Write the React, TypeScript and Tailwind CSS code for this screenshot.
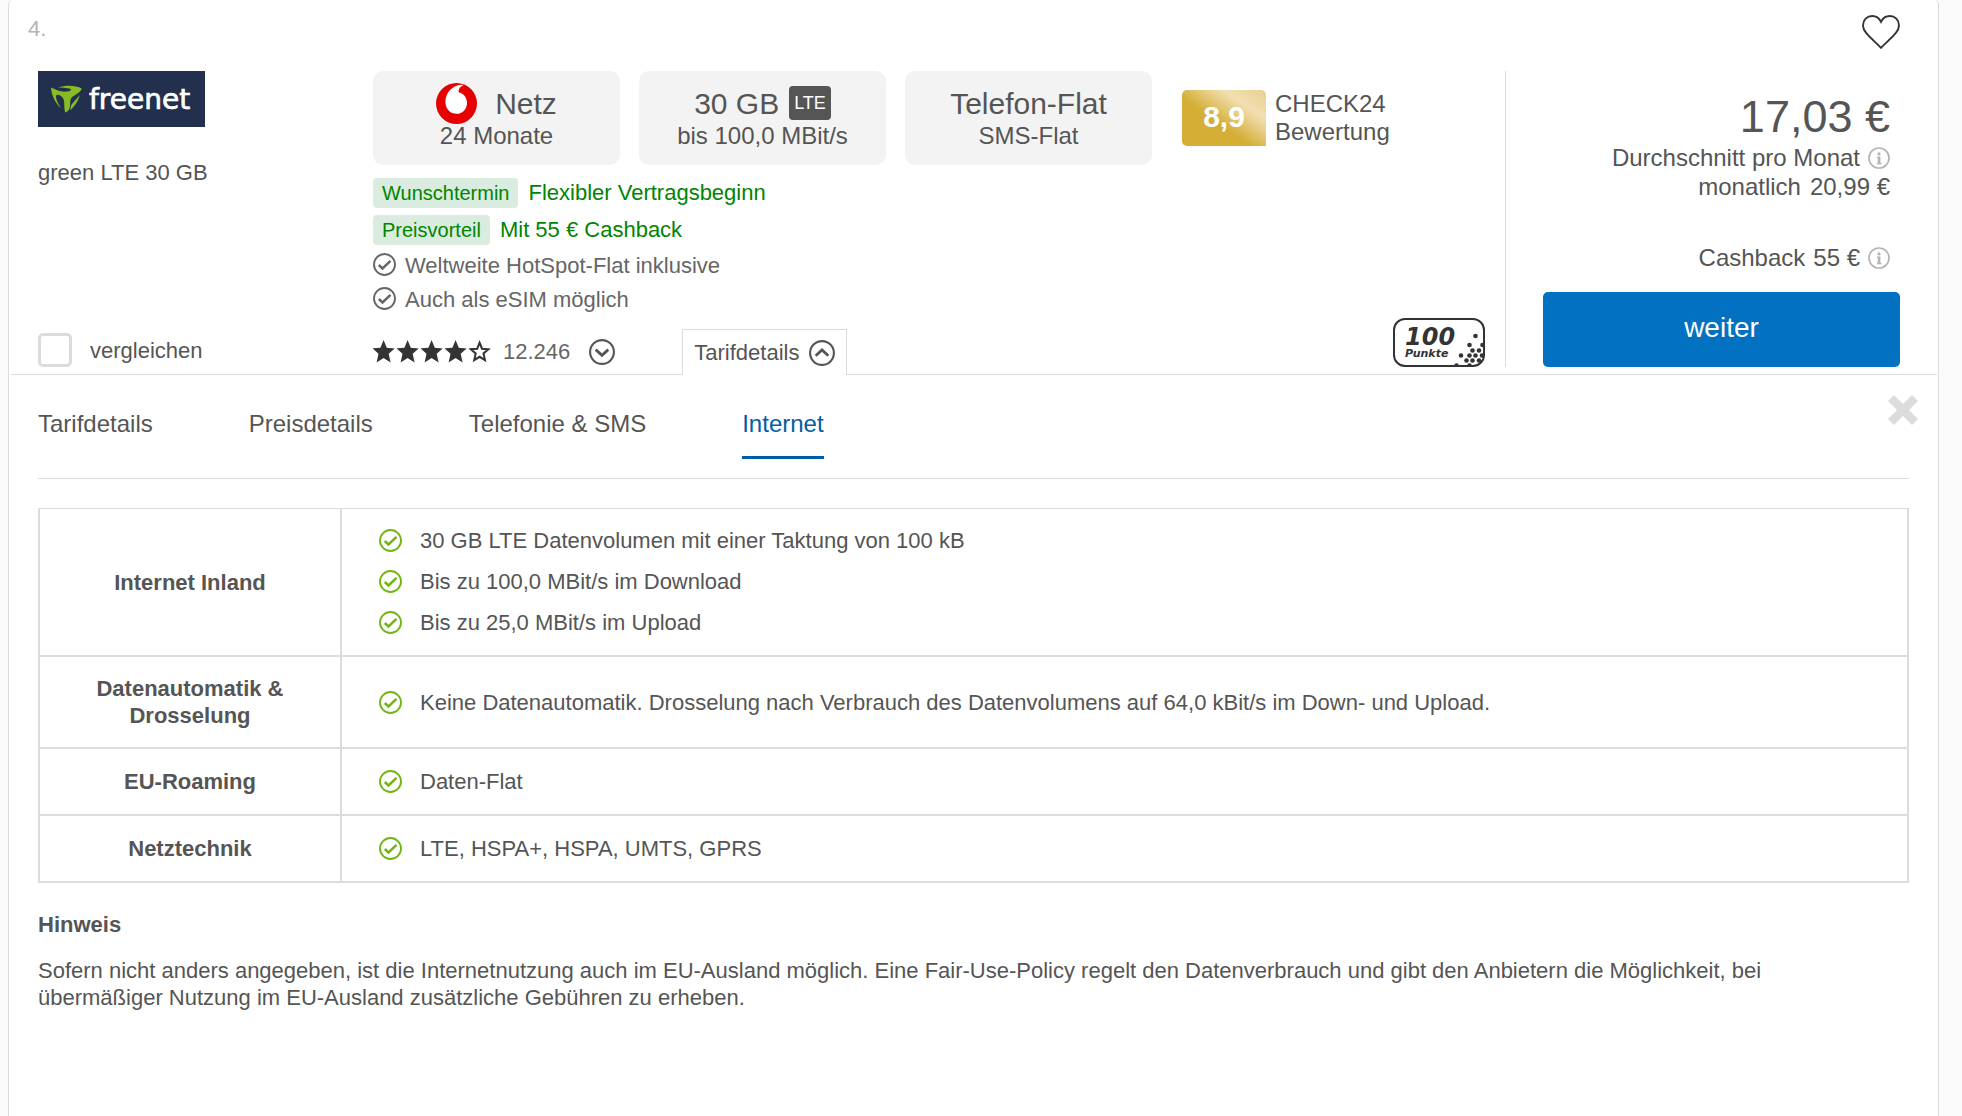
import type { ReactNode } from 'react'

const tabs = ['Tarifdetails', 'Preisdetails', 'Telefonie & SMS', 'Internet']

const rows = [
  {
    title: 'Internet Inland',
    items: [
      '30 GB LTE Datenvolumen mit einer Taktung von 100 kB',
      'Bis zu 100,0 MBit/s im Download',
      'Bis zu 25,0 MBit/s im Upload',
    ],
  },
  {
    title: 'Datenautomatik & Drosselung',
    items: ['Keine Datenautomatik. Drosselung nach Verbrauch des Datenvolumens auf 64,0 kBit/s im Down- und Upload.'],
  },
  { title: 'EU-Roaming', items: ['Daten-Flat'] },
  { title: 'Netztechnik', items: ['LTE, HSPA+, HSPA, UMTS, GPRS'] },
]

const CheckCircle = ({ className }: { className: string }) => (
  <svg viewBox="0 0 23 23" fill="none" stroke="currentColor" className={`h-[23px] w-[23px] shrink-0 ${className}`}>
    <circle cx="11.5" cy="11.5" r="10.5" strokeWidth="1.9" />
    <path d="M5.8 12l3.7 3.5 8-7.6" strokeWidth="2.5" />
  </svg>
)

const ChevronCircle = ({ up = false }: { up?: boolean }) => (
  <svg viewBox="0 0 26 26" fill="none" stroke="currentColor" className="h-[26px] w-[26px] shrink-0">
    <circle cx="13" cy="13" r="11.9" strokeWidth="2.1" />
    <path d={up ? 'M6.7 15.7l6.3-5.7 6.3 5.7' : 'M6.7 10.6l6.3 5.7 6.3-5.7'} strokeWidth="2.8" />
  </svg>
)

const InfoIcon = () => (
  <svg viewBox="0 0 22 22" className="h-[22px] w-[22px] shrink-0 text-[#b4b4b4]">
    <circle cx="11" cy="11" r="10" fill="none" stroke="currentColor" strokeWidth="1.7" />
    <circle cx="11" cy="6.9" r="1.6" fill="currentColor" />
    <path d="M9 9.6h3.4v6.2h1v1.4H8.8v-1.4h1V11H9z" fill="currentColor" />
  </svg>
)

const Star = ({ filled }: { filled: boolean }) => (
  <svg viewBox="0 0 24 24" className="h-6 w-6 text-[#333]">
    <path
      d={
        filled
          ? 'M10.6 0l3.2 7.7 7.9.7-6 5.3 1.9 8.7-7-4.4-7 4.4 1.9-8.7-6-5.3 7.9-.7z'
          : 'M10.6 2.7l2.4 6 6.4.5-4.9 4.2 1.5 6.8-5.4-3.4-5.4 3.4 1.5-6.8-4.9-4.2 6.4-.5z'
      }
      fill={filled ? 'currentColor' : 'none'}
      stroke={filled ? 'none' : 'currentColor'}
      strokeWidth="2"
    />
  </svg>
)

const FreenetLogo = () => (
  <svg viewBox="0 0 167 56" role="img" aria-label="freenet" className="h-14 w-[167px]">
    <rect width="167" height="56" fill="#22304d" />
    <g fill="#86bc25">
      <path d="M13 16.4c4 1.8 7.600 3.400 11.500 4.100 4.500.6 8-.5 8.500-1.800.3-1.200-5-2.200-13-2.200 8-2.800 18-2.200 23.700.9-.6 3.200-5.700 6-9.300 8.400-2.300 1.700-2.200 6-2.400 9.200-.2 3-1.500 5.300-4.600 6.600-1.200-2-1-6.300-1.200-9.600-.2-3.800-1.400-6-4-7.400-2.700-1.400-4.500-.8-4.200 1.700.4 3 2.500 7.200 4.800 10.700C17 31.500 13.200 23 13 16.400z" />
      <path d="M41.800 24.200c-1.500 5.500-5.300 11.300-9.600 15 .2-2.300.6-4.300 1.400-5.800 2-2.400 5-5.800 8.200-9.200z" />
    </g>
    <text
      x="51"
      y="38"
      fill="#fff"
      stroke="#fff"
      strokeWidth="0.7"
      fontFamily="'DejaVu Sans', sans-serif"
      fontSize="28"
    >
      freenet
    </text>
  </svg>
)

const VodafoneIcon = () => (
  <svg viewBox="0 0 41 41" className="h-[41px] w-[41px] shrink-0">
    <circle cx="20.500" cy="20.500" r="20.500" fill="#e60000" />
    <path
      d="M27.500 2.200c-2.900.8-5.100 3.700-4.900 7 4.600 1 8.400 5 8.400 10.500 0 6.400-4.400 11.100-10.400 11.100-6.300 0-11.200-4.900-11.200-12.100 0-8.200 6.600-16.300 15.800-16.900 1 0 1.800.1 2.300.4z"
      fill="#fff"
    />
  </svg>
)

const dots = [
  [82.5, 18], [76.5, 27], [89.500, 27], [79.500, 32.500], [86, 32.500], [68, 37.500], [76.500, 37.500],
  [82.500, 37.500], [89, 37.500], [73.500, 42.500], [79.500, 42.500], [86, 42.500], [63.500, 47.500], [76.500, 47.500],
]

const PointsBadge = () => (
  <svg viewBox="0 0 92 49" role="img" aria-label="100 Punkte" className="h-[49px] w-[92px] shrink-0">
    <clipPath id="points-frame">
      <rect x="1" y="1" width="90" height="47" rx="11" />
    </clipPath>
    <g clipPath="url(#points-frame)" fill="#333">
      {dots.map(([cx, cy]) => (
        <circle key={`${cx}-${cy}`} cx={cx} cy={cy} r="2.300" />
      ))}
    </g>
    <rect x="1" y="1" width="90" height="47" rx="11" fill="none" stroke="#333" strokeWidth="2" />
    <g fill="#333" fontFamily="'DejaVu Sans', sans-serif" fontWeight="bold" fontStyle="italic">
      <text x="12" y="27" fontSize="24">
        100
      </text>
      <text x="12" y="39" fontSize="11">
        Punkte
      </text>
    </g>
  </svg>
)

const Feature = ({ head, sub }: { head: ReactNode; sub: string }) => (
  <div className="flex h-[94px] w-[247px] flex-col items-center justify-center rounded-[10px] bg-[#f3f3f3]">
    <div className="flex h-9 items-center text-[30px]">{head}</div>
    <div className="text-2xl leading-[30px]">{sub}</div>
  </div>
)

const Benefit = ({ label, text }: { label: string; text: string }) => (
  <div className="flex items-center gap-[10px] leading-[30px] text-[#008500]">
    <span className="rounded-sm bg-[#d9ecdf] px-[9px] text-xl leading-[30px]">{label}</span>
    <span>{text}</span>
  </div>
)

const Offer = () => (
  <section className="mx-px border-b border-[#dcdcdc]">
    <div className="flex h-[71px] items-start justify-between pr-[37px] pl-[18px]">
      <span className="pt-[15px] leading-7 text-[#b4b4b4]">4.</span>
      <button aria-label="Merken" className="mt-[15px]">
        <svg viewBox="0 0 38 34" fill="none" stroke="#333" strokeWidth="1.900" className="h-[34px] w-[38px]">
          <path d="M19 32.800C14 27.500 8.500 23.200 4.300 18.200 2 15.500 1 13.400 1 10.500 1 5 5 1 10.200 1c3.800 0 7 2.200 8.800 5.800C20.800 3.200 24 1 27.800 1 33 1 37 5 37 10.500c0 2.900-1 5-3.300 7.700C29.500 23.200 24 27.500 19 32.800z" />
        </svg>
      </button>
    </div>

    <div className="grid grid-cols-[335px_1fr_432px] pl-7">
      <div className="flex flex-col items-start pb-[7px]">
        <FreenetLogo />
        <p className="mt-8 leading-7">green LTE 30 GB</p>
        <label className="mt-auto flex items-center gap-[18px]">
          <input
            type="checkbox"
            className="h-[34px] w-[34px] appearance-none rounded-[5px] border-3 border-[#dcdcdc] bg-white checked:bg-[#0271c2]"
          />
          vergleichen
        </label>
      </div>

      <div className="flex flex-col">
        <div className="flex items-center gap-[19px]">
          <Feature
            head={
              <span className="flex items-center gap-[18px]">
                <VodafoneIcon />
                Netz
              </span>
            }
            sub="24 Monate"
          />
          <Feature
            head={
              <span className="flex items-center gap-[10px]">
                30 GB
                <span className="rounded-sm bg-[#555] px-[5px] text-lg leading-[34px] text-white">LTE</span>
              </span>
            }
            sub="bis 100,0 MBit/s"
          />
          <Feature head="Telefon-Flat" sub="SMS-Flat" />
          <div className="ml-[11px] flex items-center gap-[9px]">
            <span className="h-14 w-[84px] rounded-[5px] rounded-br-none bg-[linear-gradient(35deg,#d4ae35_42%,#f2dfb2_74%,#e8cf92)] text-center text-[30px] leading-[54px] font-bold text-white">
              8,9
            </span>
            <span className="text-2xl leading-7">
              CHECK24
              <br />
              Bewertung
            </span>
          </div>
        </div>

        <div className="mt-[13px] flex flex-col gap-[7px]">
          <Benefit label="Wunschtermin" text="Flexibler Vertragsbeginn" />
          <Benefit label="Preisvorteil" text="Mit 55 € Cashback" />
        </div>
        <ul className="mt-1 leading-[34px] text-[#666]">
          <li className="flex items-center gap-[9px]">
            <CheckCircle className="mb-1" />
            Weltweite HotSpot-Flat inklusive
          </li>
          <li className="flex items-center gap-[9px]">
            <CheckCircle className="mb-1" />
            Auch als eSIM möglich
          </li>
        </ul>

        <div className="mt-3 flex h-[45px] items-center">
          <div className="flex" role="img" aria-label="4 von 5 Sternen">
            {[1, 2, 3, 4, 5].map((n) => (
              <Star key={n} filled={n <= 4} />
            ))}
          </div>
          <span className="ml-[10px] text-[#666]">12.246</span>
          <button aria-label="Bewertungen anzeigen" className="ml-[19px]">
            <ChevronCircle />
          </button>
          <button className="relative -mb-px ml-[67px] flex h-[46px] items-center gap-[10px] border border-b-0 border-[#dcdcdc] bg-white px-[11px]">
            Tarifdetails
            <ChevronCircle up />
          </button>
          <div className="mr-5 mb-[7px] ml-auto self-end">
            <PointsBadge />
          </div>
        </div>
      </div>

      <div className="mb-[7px] flex flex-col border-l border-[#dcdcdc] pr-[37px] pl-[37px]">
        <div className="mt-5 flex flex-col items-end pr-[10px] text-2xl leading-[29px]">
          <div className="text-[45px] leading-[52px]">17,03 €</div>
          <div className="flex items-center gap-2">
            Durchschnitt pro Monat
            <InfoIcon />
          </div>
          <div className="flex gap-[9px]">
            <span>monatlich</span>
            <span>20,99 €</span>
          </div>
          <div className="mt-[42px] flex items-center gap-2">
            <span>Cashback</span>
            <span>55 €</span>
            <InfoIcon />
          </div>
        </div>
        <button className="mt-auto h-[75px] rounded-[5px] bg-[#0271c2] pb-1 text-[28px] text-white">weiter</button>
      </div>
    </div>
  </section>
)

const Details = () => (
  <section className="relative px-[29px] pt-[35px]">
    <button aria-label="Schließen" className="absolute top-5 right-5">
      <svg viewBox="0 0 30 30" className="h-[30px] w-[30px]">
        <path d="M6 0l9 9 9-9 6 6-9 9 9 9-6 6-9-9-9 9-6-6 9-9-9-9z" fill="#dcdcdc" />
      </svg>
    </button>

    <nav className="flex gap-24 border-b border-[#dcdcdc] pb-[19px] text-2xl leading-7">
      {tabs.map((tab) => (
        <button
          key={tab}
          className={
            tab === 'Internet'
              ? 'border-b-3 border-[#005ea8] pb-[18px] text-[#005ea8]'
              : 'border-b-3 border-transparent pb-[18px]'
          }
        >
          {tab}
        </button>
      ))}
    </nav>

    <table className="mt-[29px] w-full border-collapse leading-[27px]">
      <tbody>
        {rows.map((row) => (
          <tr key={row.title} className="group">
            <th className="w-[302px] border-2 border-[#dcdcdc] px-10 py-[18px] group-first:border-t">{row.title}</th>
            <td className="border-2 border-[#dcdcdc] py-[19px] pr-4 pl-[37px] group-first:border-t group-first:pt-[18px]">
              <ul className="flex flex-col gap-[14px]">
                {row.items.map((item) => (
                  <li key={item} className="flex items-center gap-[18px]">
                    <CheckCircle className="text-[#73b512]" />
                    {item}
                  </li>
                ))}
              </ul>
            </td>
          </tr>
        ))}
      </tbody>
    </table>

    <h3 className="mt-7 leading-[27px] font-bold">Hinweis</h3>
    <p className="mt-[19px] pr-24 leading-[27px]">
      Sofern nicht anders angegeben, ist die Internetnutzung auch im EU-Ausland möglich. Eine Fair-Use-Policy regelt den
      Datenverbrauch und gibt den Anbietern die Möglichkeit, bei übermäßiger Nutzung im EU-Ausland zusätzliche Gebühren
      zu erheben.
    </p>
  </section>
)

export default function App() {
  return (
    <div className="min-h-screen bg-[#fafafa] pr-[23px] pl-2 font-['Liberation_Sans',Arial,sans-serif] text-[22px] text-[#555]">
      <main className="min-h-screen rounded-t-[5px] border-x border-[#dcdcdc] bg-white">
        <Offer />
        <Details />
      </main>
    </div>
  )
}
